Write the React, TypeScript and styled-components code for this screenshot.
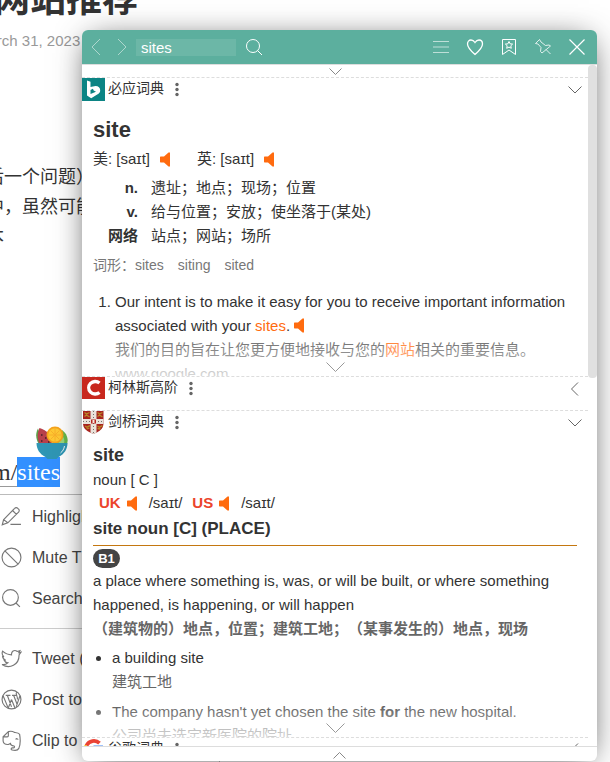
import React from "react";
import styled, { createGlobalStyle } from "styled-components";

const Global = createGlobalStyle`
  * { box-sizing: border-box; }
  body {
    margin: 0;
    background: #fff;
    font-family: "Liberation Sans", "Noto Sans CJK SC", sans-serif;
    color: #333;
    text-spacing-trim: space-all;
  }
  button { border: 0; padding: 0; background: none; font: inherit; color: inherit; cursor: pointer; }
`;

const Page = styled.div`
  position: relative;
  height: 100vh;
  overflow: hidden;
`;

const Article = styled.article`
  margin-left: -14px;
  white-space: nowrap;
`;

const Title = styled.h1`
  margin: -24px 0 0 8px;
  font-size: 36px;
  line-height: 48px;
  font-weight: 700;
`;

const PostDate = styled.time`
  display: block;
  margin: 6px 0 0 -10px;
  font-size: 15px;
  line-height: 22px;
  color: #999;
`;

const Paragraph = styled.p`
  margin: 110px 0 0;
  font-size: 18px;
  line-height: 30px;
`;

const PageLink = styled.a`
  display: inline-block;
  margin: 206px 0 0 6px;
  border-bottom: 1px solid #999;
  font-family: "Liberation Serif", serif;
  font-size: 24px;
  line-height: 28px;
  color: #333;
  text-decoration: none;
`;

const Selected = styled.span`
  padding: 2px 0;
  background: #3390ff;
  color: #fff;
`;

const BowlButton = styled.button`
  position: absolute;
  top: 426px;
  left: 36px;
  width: 32px;
  height: 33px;
`;

const ContextMenu = styled.nav`
  position: absolute;
  top: 494px;
  bottom: 0;
  left: -6px;
  width: 226px;
  padding: 1px 0 0 5px;
  background: #fff;
  border: 1px solid #bbb;
  border-bottom: 0;
`;

const MenuItem = styled.button`
  display: flex;
  align-items: center;
  gap: 10px;
  width: 100%;
  height: 41px;
  padding-left: 1px;
  font-size: 16px;
  color: #444;
  white-space: nowrap;
`;

const MenuLine = styled.hr`
  margin: 9px 0;
  border: 0;
  border-top: 1px solid #ccc;
`;

const Panel = styled.section`
  position: absolute;
  top: 30px;
  right: 13px;
  bottom: 1px;
  left: 82px;
  display: flex;
  flex-direction: column;
  overflow: hidden;
  border-radius: 6px;
  background: #fff;
  box-shadow: 0 4px 31px -8px rgba(0, 0, 0, 0.8);
`;

const Toolbar = styled.header`
  display: flex;
  flex: none;
  align-items: center;
  justify-content: space-between;
  height: 34px;
  padding: 0 11px 0 6px;
  background: #5caf9e;
  color: #fff;
`;

const Group = styled.div<{ $gap: number }>`
  display: flex;
  align-items: center;
  gap: ${(p) => p.$gap}px;
`;

const IconButton = styled.button<{ $faint?: boolean }>`
  display: flex;
  opacity: ${(p) => (p.$faint ? 0.5 : 1)};
`;

const SearchBox = styled.input`
  width: 100px;
  height: 17px;
  padding: 0 5px;
  border: 0;
  outline: 0;
  background: rgba(255, 255, 255, 0.1);
  color: #fff;
  font: 15px "Liberation Sans", sans-serif;
`;

const Body = styled.div`
  display: flex;
  flex: 1;
  min-height: 0;
  border-top: 1px solid #ddd;
`;

const Results = styled.main`
  flex: 1;
  min-width: 0;
  overflow: hidden;
`;

const Scrollbar = styled.div`
  width: 9px;
`;

const Thumb = styled.div`
  height: 46%;
  border-radius: 4px;
  background: #e0e0e0;
`;

const Expand = styled.button`
  display: flex;
  justify-content: center;
  width: 100%;
  height: 12px;
  padding-top: 3px;
  color: #888;
`;

const Footer = styled.footer`
  flex: none;
  height: 15px;
  border-top: 1px solid #ddd;
`;

const FooterButton = styled(Expand)`
  padding-top: 5px;
`;

const Dict = styled.section`
  border-top: 1px dashed #ddd;
`;

const DictHead = styled.div`
  display: flex;
  align-items: center;
  height: 23px;
  padding-right: 6px;
`;

const DictName = styled.h2`
  margin: 0 9px 2px 3px;
  font-size: 14px;
  line-height: 21px;
  font-weight: 400;
`;

const Fold = styled.button`
  display: flex;
  margin-left: auto;
  color: #666;
`;

const DictBody = styled.div<{ $height: number }>`
  position: relative;
  height: ${(p) => p.$height}px;
  padding: 0 11px;
  overflow: hidden;
  font-size: 15px;
  line-height: 24px;
`;

const Fade = styled.button`
  position: absolute;
  right: 0;
  bottom: 0;
  left: 0;
  display: flex;
  align-items: flex-end;
  justify-content: center;
  width: 100%;
  height: 46px;
  padding-bottom: 4px;
  background: linear-gradient(rgba(255, 255, 255, 0) 0%, rgba(255, 255, 255, 0.7) 100%);
  color: #999;
`;

const Headword = styled.h3<{ $size: number }>`
  margin: 0;
  font-size: ${(p) => p.$size}px;
  line-height: ${(p) => p.$size + 8}px;
`;

const BingWord = styled(Headword)`
  padding-top: 14px;
`;

const CambridgeWord = styled(Headword)`
  padding-top: 8px;
`;

const Phonetics = styled.div`
  display: flex;
  align-items: center;
  gap: 10px;
  padding-top: 2px;
`;

const Accent = styled.span`
  display: flex;
  align-items: center;
  gap: 10px;
  margin-right: 16px;
`;

const Definitions = styled.dl`
  display: grid;
  grid-template-columns: 45px 1fr;
  column-gap: 13px;
  margin: 5px 0;
  dt { text-align: right; font-weight: 700; }
  dd { margin: 0; }
`;

const Forms = styled.div`
  display: flex;
  gap: 14px;
  font-size: 14px;
  color: #777;
`;

const Examples = styled.ol`
  margin: 13px 0 0;
  padding-left: 22px;
  p { margin: 0; }
`;

const Muted = styled.p<{ $color: string }>`
  color: ${(p) => p.$color};
`;

const Mark = styled.span`
  color: #ff6b0f;
`;

const Sound = styled.button`
  display: inline-flex;
  vertical-align: -2px;
`;

const CambridgePhonetics = styled.div`
  display: flex;
  align-items: center;
  gap: 6px;
  height: 22px;
  padding-left: 6px;
`;

const Region = styled.strong`
  color: #eb442c;
`;

const Ipa = styled.span`
  margin: 0 4px 0 5px;
`;

const Sense = styled.h4`
  margin: 0 0 3px;
  padding: 3px 0 4px;
  border-bottom: 1px solid #c47710;
  font-size: 17px;
  line-height: 24px;
`;

const Level = styled.span`
  display: block;
  width: 27px;
  border-radius: 10px;
  background: #444;
  color: #fff;
  font-size: 13px;
  font-weight: 700;
  line-height: 19px;
  text-align: center;
`;

const Meaning = styled.p`
  margin: 1px 0 0;
`;

const Translation = styled.p`
  margin: 0;
  font-weight: 700;
  color: #666;
`;

const Bullets = styled.ul`
  margin: 5px 0 0;
  padding-left: 19px;
  li + li { margin-top: 6px; }
  p { margin: 0; }
`;

const Speaker = ({ label = "发音" }: { label?: string }) => (
  <Sound aria-label={label}>
    <svg width="11" height="15" viewBox="0 0 11 15" fill="#ff6b0f">
      <path d="M.5 4.500H4L8.500.5H10v14H8.500L4 10.500H.5L0 10V5z" />
    </svg>
  </Sound>
);

type ChevronProps = { w: number; h: number; d: string };
const Chevron = ({ w, h, d }: ChevronProps) => (
  <svg width={w} height={h} viewBox={`0 0 ${w} ${h}`} fill="none" stroke="currentColor">
    <path d={d} />
  </svg>
);

const Dots = () => (
  <button aria-label="更多">
    <svg width="8" height="15" viewBox="0 0 8 15" fill="#666" display="block">
      <circle cx="4" cy="2.5" r="1.7" />
      <circle cx="4" cy="7.5" r="1.7" />
      <circle cx="4" cy="12.5" r="1.7" />
    </svg>
  </button>
);

const BingLogo = () => (
  <svg width="23" height="23" viewBox="0 0 23 23">
    <path fill="#0c8484" d="M0 0h23v23H0z" />
    <path fill="#fff" d="M5 2.500l3.500 1.200v5.300l5-1c3 0 4.700 1.700 4.700 4.200 0 2-1 3.300-3 4.300l-6 3.700L5 17.500zM8.500 12v4l5.500-2.200-2.300-1.300-.8-1.800z" fillRule="evenodd" />
  </svg>
);

const CollinsLogo = () => (
  <svg width="23" height="23" viewBox="0 0 23 23">
    <path fill="#c8281e" d="M0 0h23v22H0z" />
    <path d="M17.500 6A6.500 6.300 0 1 0 17.500 15.500" fill="none" stroke="#fff" strokeWidth="3.400" />
  </svg>
);

const CambridgeLogo = () => (
  <svg width="23" height="23" viewBox="0 0 23 23">
    <clipPath id="shield">
      <path d="M1 0h20.500v12c0 6-4 8.500-10 11C5 20.500 1 18 1 12z" />
    </clipPath>
    <g clipPath="url(#shield)">
      <path fill="#a8231f" d="M0 0h23v23H0z" />
      <path fill="#e9e2da" d="M8.500 0h6v23h-6zM0 8h23v5H0z" />
      <g fill="none" stroke="#b88a28" strokeWidth="1.300">
        <path d="M2.500 1.500l2 1.500 3-1.500M2.500 5.500l2-1.500 3 2M15.500 1.500l2 1.500 3-1.500M15.500 5.500l2-1.500 3 2M3 15l2 1.200 3-1.500M4.500 18l3-1M15.500 15l2 1.200 3-1.500M15.500 17.500l3 .5" />
      </g>
      <path stroke="#77706a" strokeWidth="1" strokeDasharray="1 2" d="M11.500 0v23M1 10.500h21" />
      <path fill="#b8231f" d="M9 8.500h5v4H9z" />
      <path fill="#f4ece2" d="M10.500 9h2v3h-2z" />
    </g>
  </svg>
);

const GoogleLogo = () => (
  <svg width="23" height="23" viewBox="0 0 23 23" fill="none" strokeWidth="3.800">
    <path stroke="#ea4335" d="M17.500 5.200A8.200 8.200 0 0 0 4.500 7.500" />
    <path stroke="#fbbc05" d="M4.500 7.500a8.200 8.200 0 0 0 0 7.500" />
    <path stroke="#34a853" d="M4.500 15a8.200 8.200 0 0 0 12.500 3" />
    <path stroke="#4285f4" d="M17 18a8.200 8.200 0 0 0 2.500-8.500H11.500" />
  </svg>
);

const Bowl = () => (
  <svg width="32" height="33" viewBox="0 0 32 33" display="block">
    <path fill="#65b84c" d="M26 4c4 3 7 8 5 14H20z" />
    <path fill="#9ad67c" d="M25 8c3 3 4 6 3 10h-6z" />
    <path fill="#57a548" d="M2 2.500C-1 8 0 14 3 18h4z" />
    <path fill="#b8414b" d="M3.500 2C11 4 16 10 16 18H3.500C1 13 1 7 3.500 2z" />
    <path fill="#612831" d="M5 8h1.500v2H5zM9 11h1.500v2H9zM5 14h1.500v2H5zM12 15h1.500v2H12z" />
    <circle cx="19" cy="9" r="8.500" fill="#f6a41c" />
    <circle cx="19" cy="9" r="6.800" fill="#ffc933" />
    <path stroke="#f9b02a" d="M19 2v14M12.500 9h13M14.500 4.500l9 9M23.500 4.500l-9 9" />
    <path fill="#2f96b4" d="M.5 17h31c0 6-3 11-9 14l-2 2h-9l-2-2C3.500 28 .5 23 .5 17z" />
    <path fill="none" stroke="#fff" strokeWidth=".9" d="M28.500 20c-.5 3-2 5.500-4 7" />
  </svg>
);

const menuIcons = {
  pen: (
    <path d="M2.500 13L13 2.200a2 2 0 0 1 3 0l.7.700a2 2 0 0 1 0 3L6.500 16 1.200 18zM2.500 13l4 3M11 4.300l3.700 3.700M9 17.500h10" />
  ),
  mute: <path d="M10 1a9 9 0 1 0 0 18 9 9 0 0 0 0-18M3.700 3.700l12.600 12.600" />,
  search: <path d="M9 1.500a7.500 7.500 0 1 0 0 15 7.500 7.500 0 0 0 0-15M14.500 14.500l3.500 3.500" />,
  tweet: (
    <path d="M19 4l-2 .5L18 2.500l-2.500.8C12.500 1 9.700 3.500 10 6.500 6 6.500 3.500 4.800 1.500 3c-.8 2-.3 4 1.300 5.300L1.500 8c.2 2 1.500 3 3 3.600H3c.6 1.500 1.700 2.300 3.500 2.500C5 15.500 3 16 1 15.700 8 20.500 17.500 16 17.200 6.500z" />
  ),
  wordpress: (
    <>
      <circle cx="10" cy="10" r="9" />
      <path d="M2 6.500L6.800 18M4.500 6H9M6 6l4 11M10.500 6h4M12 6l3.500 9M10 10l-3 8M10 10l3.500 8.500M18 6.500L14.500 17M15 3c-2 1.500 1.500 4 .5 7" />
    </>
  ),
  clip: (
    <path d="M7 1.500L2 6.500v4c.3 2.500 2 3.500 5 3.300l2-1c0 2 1.500 2.200 3.500 2.500.8.800.2 1.700-.7 1.700h-1c-1.500.3-1.500 1.800-.3 2 2 .5 5.500.5 6.500-1.500 1.700-4 1.500-9 .7-13.500-1-1.500-3.200-1.500-5-1.700C11 1 9 1 7 1.500zM7 2v3.500c0 1-.5 1-1 1H2M14 9c.5-1 2-1 2.200.3" />
  ),
};

const MenuIcon = ({ name }: { name: keyof typeof menuIcons }) => (
  <svg width="21" height="21" viewBox="0 0 20 20" fill="none" stroke="#777" strokeWidth="1.100">
    {menuIcons[name]}
  </svg>
);

const MenuEntry = ({ icon, children }: { icon: keyof typeof menuIcons; children: string }) => (
  <MenuItem>
    <MenuIcon name={icon} />
    {children}
  </MenuItem>
);

const toolIcons: { label: string; art: React.ReactNode }[] = [
  { label: "菜单", art: <path d="M1 3.500h16M1 9h16M1 14.500h16" opacity=".6" /> },
  {
    label: "收藏",
    art: <path d="M9 16.500C5 13 1.500 9.800 1.500 6 1.500 3.500 3 2 5 2c2 0 3 1 4 2.500C10 3 11 2 13 2c2 0 3.500 1.500 3.500 4 0 3.800-3.500 7-7.500 10.500z" strokeWidth="1.300" />,
  },
  {
    label: "生词本",
    art: (
      <path d="M2.500 1.500h13v15L9 12l-6.500 4.500zM9 3.500l1.100 2.300 2.500.3-1.800 1.700.5 2.500L9 9.100l-2.300 1.200.5-2.500-1.800-1.700 2.500-.3z" />
    ),
  },
  {
    label: "钉住",
    art: <path d="M5.500 1.500L1.500 5.500 4 6l3 3.500-.5 4L8 15l8.500-7-1.500-1-3.500.5L7 4zM12 11.500l4.500 4.500" opacity=".8" />,
  },
  { label: "关闭", art: <path d="M1.500 1.500l15 15M16.500 1.500l-15 15" strokeWidth="1.200" /> },
];

const DownSmall = () => <Chevron w={13} h={7} d="M.5.5l6 6 6-6" />;
const DownFold = () => <Chevron w={14} h={8} d="M.5.5L7 7 13.500.5" />;
const LeftFold = () => <Chevron w={14} h={14} d="M10 .5L3.500 7l6.500 6.500" />;
const DownWide = () => <Chevron w={19} h={10} d="M.5.5l9 9 9-9" />;

export default function App() {
  return (
    <Page>
      <Global />
      <Article>
        <Title>网站推荐</Title>
        <PostDate dateTime="2023-03-31">March 31, 2023</PostDate>
        <Paragraph>
          后一个问题）
          <br />
          中，虽然可能
          <br />
          本
        </Paragraph>
        <PageLink href="#sites">
          m/<Selected>sites</Selected>
        </PageLink>
      </Article>

      <ContextMenu>
        <MenuEntry icon="pen">Highlight</MenuEntry>
        <MenuEntry icon="mute">Mute T</MenuEntry>
        <MenuEntry icon="search">Search</MenuEntry>
        <MenuLine />
        <MenuEntry icon="tweet">Tweet (</MenuEntry>
        <MenuEntry icon="wordpress">Post to</MenuEntry>
        <MenuEntry icon="clip">Clip to</MenuEntry>
      </ContextMenu>
      <BowlButton aria-label="查词">
        <Bowl />
      </BowlButton>

      <Panel>
        <Toolbar>
          <Group $gap={9}>
            <Group $gap={10}>
              <IconButton aria-label="后退" $faint>
                <Chevron w={16} h={18} d="M12 1L4 9l8 8" />
              </IconButton>
              <IconButton aria-label="前进" $faint>
                <Chevron w={12} h={18} d="M4 1l8 8-8 8" />
              </IconButton>
              <SearchBox aria-label="搜索" defaultValue="sites" />
            </Group>
            <IconButton aria-label="查询">
              <Chevron w={18} h={18} d="M8 1.500a6.500 6.500 0 1 0 0 13 6.500 6.500 0 0 0 0-13M12.500 12.500l4.500 4.500" />
            </IconButton>
          </Group>
          <Group $gap={16}>
            {toolIcons.map((t) => (
              <IconButton key={t.label} aria-label={t.label}>
                <svg width="18" height="18" viewBox="0 0 18 18" fill="none" stroke="#fff">
                  {t.art}
                </svg>
              </IconButton>
            ))}
          </Group>
        </Toolbar>

        <Body>
          <Results>
            <Expand aria-label="展开">
              <DownSmall />
            </Expand>

            <Dict>
              <DictHead>
                <BingLogo />
                <DictName>必应词典</DictName>
                <Dots />
                <Fold aria-label="收起">
                  <DownFold />
                </Fold>
              </DictHead>
              <DictBody $height={275}>
                <BingWord $size={22}>site</BingWord>
                <Phonetics>
                  <Accent>
                    美: [saɪt] <Speaker />
                  </Accent>
                  <Accent>
                    英: [saɪt] <Speaker />
                  </Accent>
                </Phonetics>
                <Definitions>
                  <dt>n.</dt>
                  <dd>遗址；地点；现场；位置</dd>
                  <dt>v.</dt>
                  <dd>给与位置；安放；使坐落于(某处)</dd>
                  <dt>网络</dt>
                  <dd>站点；网站；场所</dd>
                </Definitions>
                <Forms>
                  <span>词形：sites</span>
                  <span>siting</span>
                  <span>sited</span>
                </Forms>
                <Examples>
                  <li>
                    <p>
                      Our intent is to make it easy for you to receive important information associated with your{" "}
                      <Mark>sites</Mark>. <Speaker />
                    </p>
                    <Muted $color="#555">
                      我们的目的旨在让您更方便地接收与您的<Mark>网站</Mark>相关的重要信息。
                    </Muted>
                    <Muted $color="#777">www.google.com</Muted>
                  </li>
                </Examples>
                <Fade aria-label="展开必应词典">
                  <DownWide />
                </Fade>
              </DictBody>
            </Dict>

            <Dict>
              <DictHead>
                <CollinsLogo />
                <DictName>柯林斯高阶</DictName>
                <Dots />
                <Fold aria-label="展开">
                  <LeftFold />
                </Fold>
              </DictHead>
              <DictBody $height={10} />
            </Dict>

            <Dict>
              <DictHead>
                <CambridgeLogo />
                <DictName>剑桥词典</DictName>
                <Dots />
                <Fold aria-label="收起">
                  <DownFold />
                </Fold>
              </DictHead>
              <DictBody $height={303}>
                <CambridgeWord $size={18}>site</CambridgeWord>
                <div>noun [ C ]</div>
                <CambridgePhonetics>
                  <Region>UK</Region>
                  <Speaker />
                  <Ipa>/saɪt/</Ipa>
                  <Region>US</Region>
                  <Speaker />
                  <Ipa>/saɪt/</Ipa>
                </CambridgePhonetics>
                <Sense>site noun [C] (PLACE)</Sense>
                <Level>B1</Level>
                <Meaning>
                  a place where something is, was, or will be built, or where something happened, is happening, or will
                  happen
                </Meaning>
                <Translation>（建筑物的）地点，位置；建筑工地；（某事发生的）地点，现场</Translation>
                <Bullets>
                  <li>
                    <p>a building site</p>
                    <Muted $color="#666">建筑工地</Muted>
                  </li>
                  <li>
                    <p>
                      The company hasn't yet chosen the site <b>for</b> the new hospital.
                    </p>
                    <Muted $color="#666">公司尚未选定新医院的院址。</Muted>
                  </li>
                </Bullets>
                <Fade aria-label="展开剑桥词典">
                  <DownWide />
                </Fade>
              </DictBody>
            </Dict>

            <Dict>
              <DictHead>
                <GoogleLogo />
                <DictName>谷歌词典</DictName>
                <Dots />
                <Fold aria-label="展开">
                  <LeftFold />
                </Fold>
              </DictHead>
            </Dict>
          </Results>
          <Scrollbar>
            <Thumb />
          </Scrollbar>
        </Body>
        <Footer>
          <FooterButton aria-label="收起面板">
            <Chevron w={13} h={7} d="M.5 6.500l6-6 6 6" />
          </FooterButton>
        </Footer>
      </Panel>
    </Page>
  );
}
